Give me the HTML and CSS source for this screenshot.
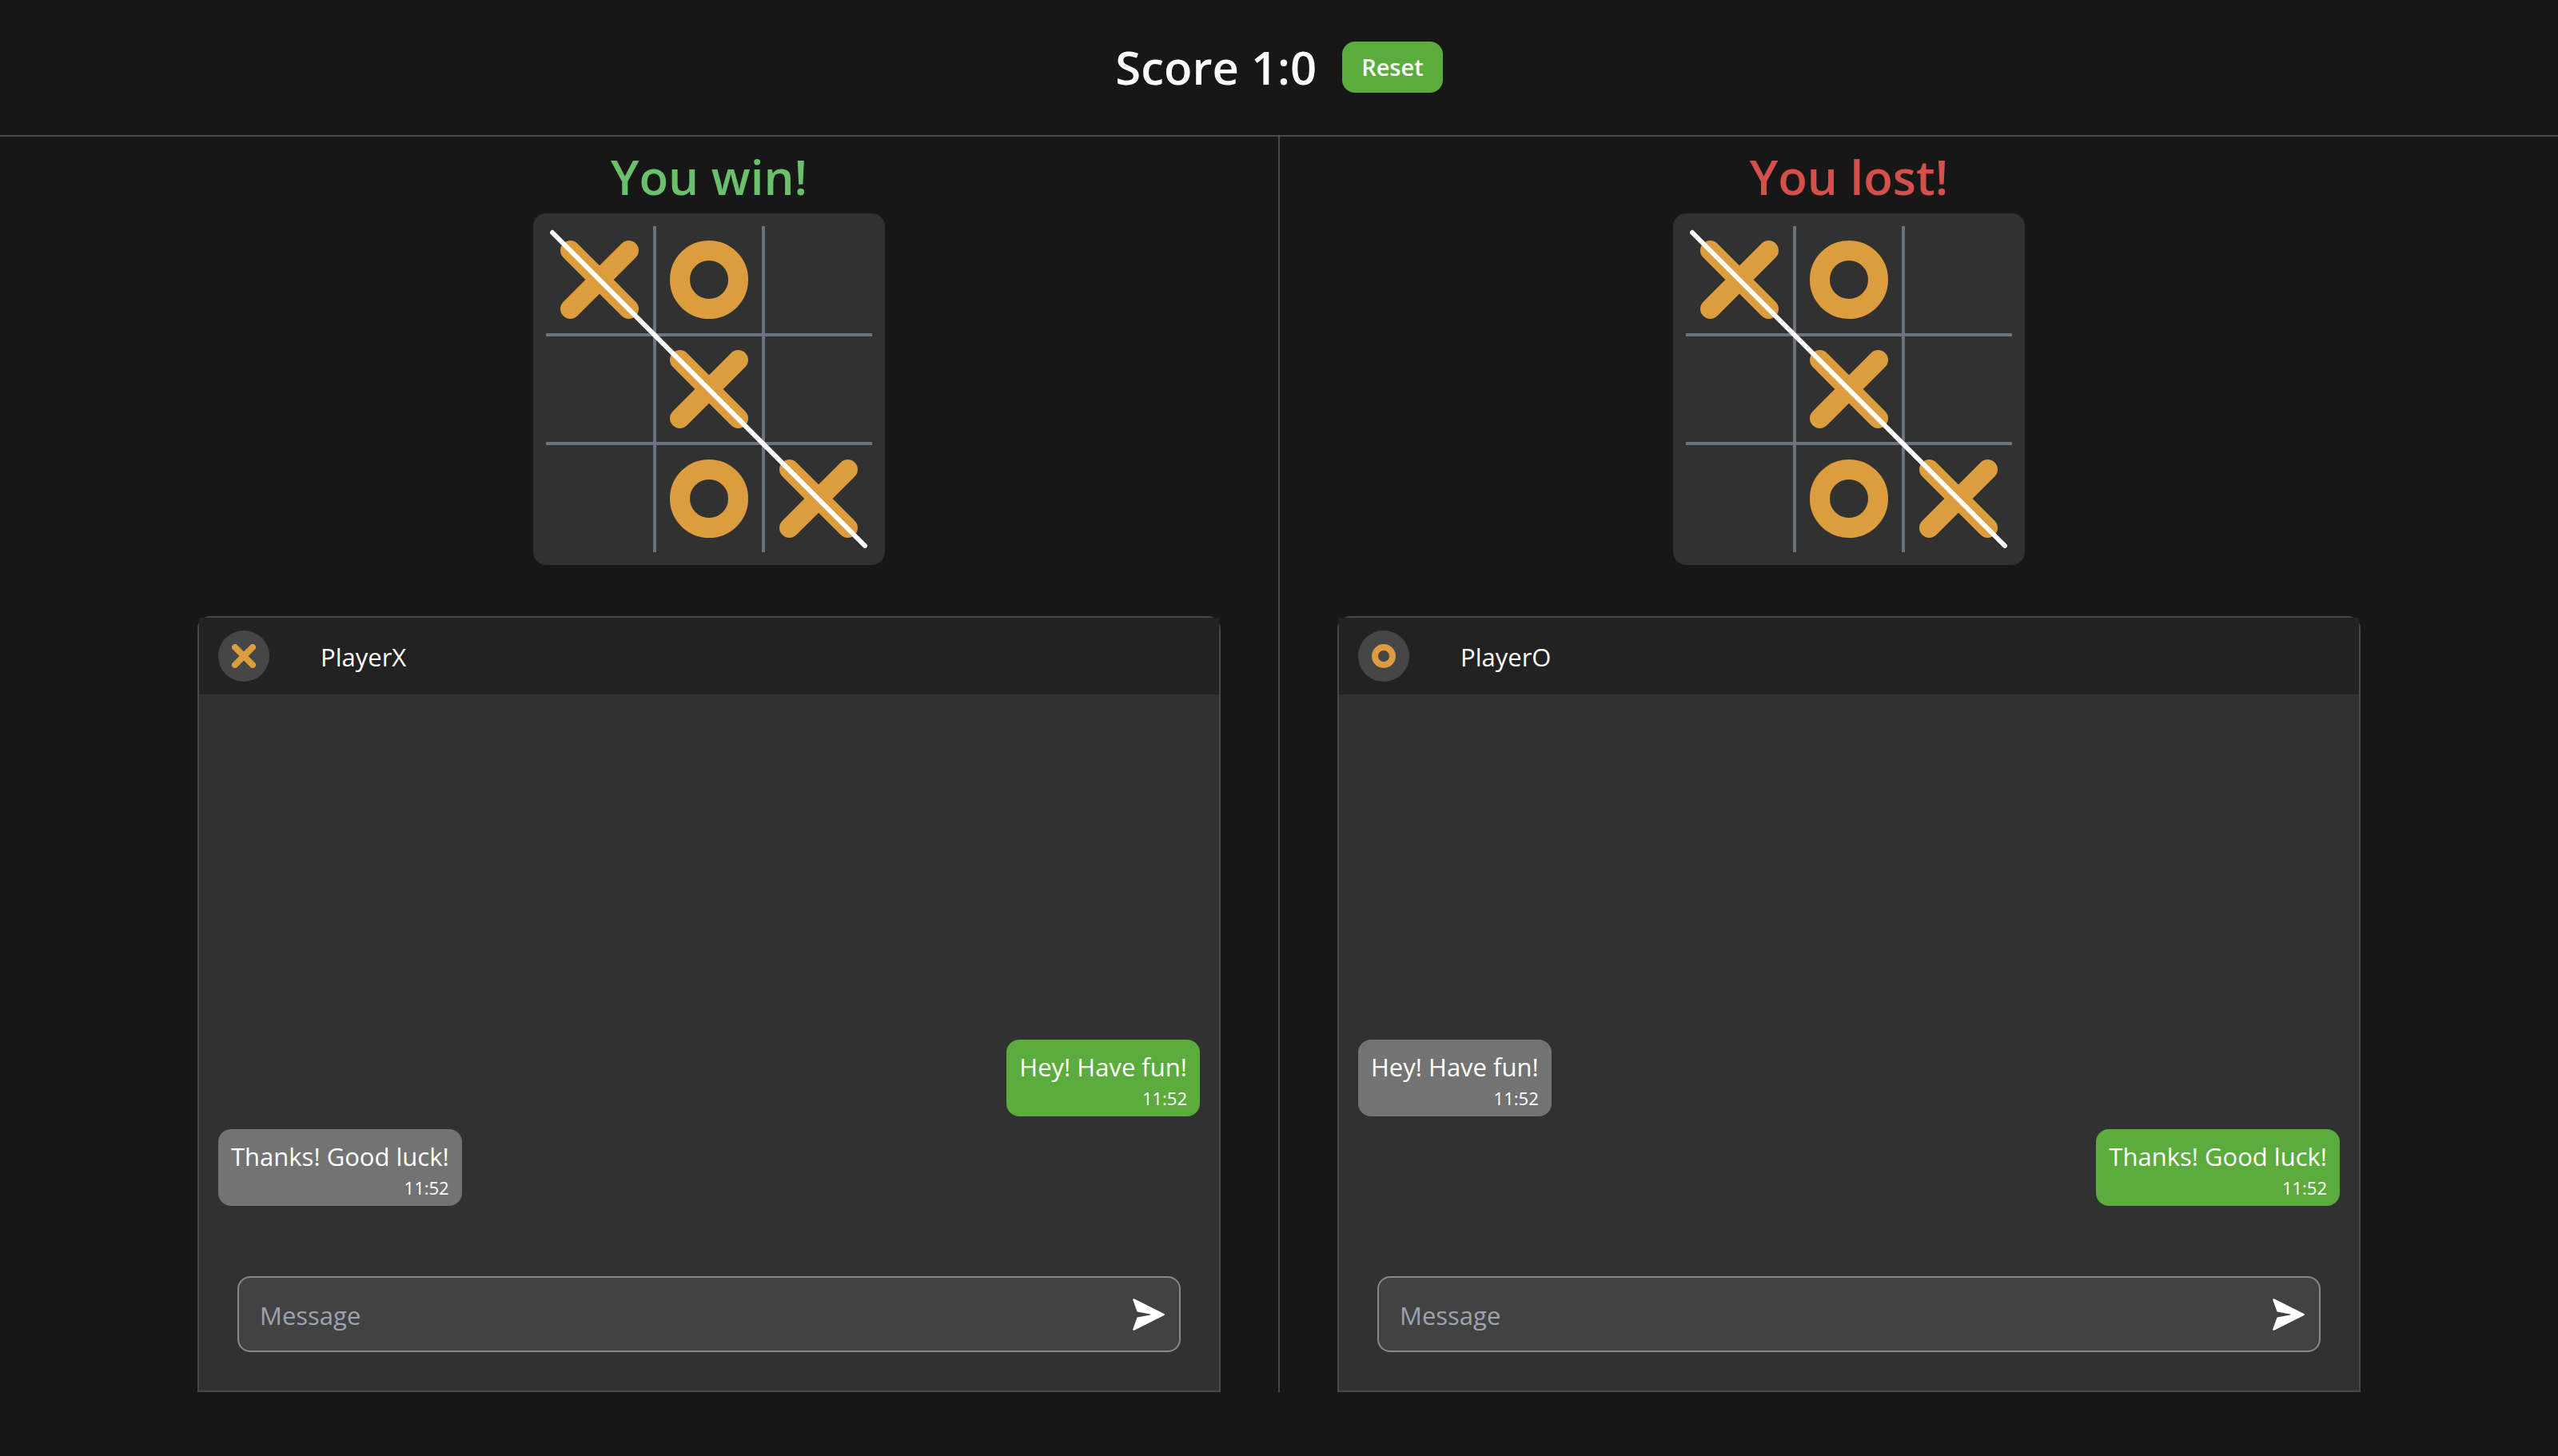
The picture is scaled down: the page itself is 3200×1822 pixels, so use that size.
FILE: index.html
```html
<!DOCTYPE html>
<html lang="en">
<head>
<meta charset="utf-8">
<meta name="viewport" content="width=device-width, initial-scale=1">
<title>Tic Tac Toe</title>
<link rel="stylesheet" href="styles.css">
</head>
<body>
<svg class="symbols" aria-hidden="true">
  <symbol id="mark-x" viewBox="0 0 98 98"><path d="M12.5 12.5l73 73M85.5 12.5l-73 73"/></symbol>
  <symbol id="mark-o" viewBox="0 0 98 98"><circle cx="49" cy="49" r="36.5"/></symbol>
  <symbol id="send" viewBox="0 0 40 40"><path d="M2.4.4 39.2 18.9a1.2 1.2 0 0 1 0 2.2L2.4 39.6A1.4 1.4 0 0 1 .4 37.8L5.6 23.4 22 20.4a.4.4 0 0 0 0-.8L5.6 16.6.4 2.2A1.4 1.4 0 0 1 2.4.4Z"/></symbol>
</svg>

<header class="score-bar">
  <h1 class="score">Score 1:0</h1>
  <button class="reset" type="button">Reset</button>
</header>

<main class="players">
  <section class="player" aria-label="PlayerX">
    <h2 class="status status-win">You win!</h2>
    <div class="board">
      <div class="cells">
        <button class="cell" type="button" aria-label="X"><svg class="mark"><use href="#mark-x"/></svg></button>
        <button class="cell" type="button" aria-label="O"><svg class="mark"><use href="#mark-o"/></svg></button>
        <button class="cell" type="button" aria-label="Empty"></button>
        <button class="cell" type="button" aria-label="Empty"></button>
        <button class="cell" type="button" aria-label="X"><svg class="mark"><use href="#mark-x"/></svg></button>
        <button class="cell" type="button" aria-label="Empty"></button>
        <button class="cell" type="button" aria-label="Empty"></button>
        <button class="cell" type="button" aria-label="O"><svg class="mark"><use href="#mark-o"/></svg></button>
        <button class="cell" type="button" aria-label="X"><svg class="mark"><use href="#mark-x"/></svg></button>
      </div>
      <svg class="strike" viewBox="0 0 440 440" aria-hidden="true"><path d="M24 24l391 392"/></svg>
    </div>
    <div class="chat">
      <div class="chat-header">
        <span class="avatar"><svg class="mark mark-small" viewBox="0 0 30 30" aria-hidden="true"><path d="M4 4l22 22M26 4l-22 22"/></svg></span>
        <span class="name">PlayerX</span>
      </div>
      <div class="messages">
        <div class="message sent"><p class="text">Hey! Have fun!</p><time class="time">11:52</time></div>
        <div class="message"><p class="text">Thanks! Good luck!</p><time class="time">11:52</time></div>
      </div>
      <form class="composer">
        <div class="field">
          <input class="input" type="text" placeholder="Message" aria-label="Message">
          <button class="send" type="button" aria-label="Send"><svg class="send-icon"><use href="#send"/></svg></button>
        </div>
      </form>
    </div>
  </section>

  <div class="divider"></div>

  <section class="player" aria-label="PlayerO">
    <h2 class="status status-lost">You lost!</h2>
    <div class="board">
      <div class="cells">
        <button class="cell" type="button" aria-label="X"><svg class="mark"><use href="#mark-x"/></svg></button>
        <button class="cell" type="button" aria-label="O"><svg class="mark"><use href="#mark-o"/></svg></button>
        <button class="cell" type="button" aria-label="Empty"></button>
        <button class="cell" type="button" aria-label="Empty"></button>
        <button class="cell" type="button" aria-label="X"><svg class="mark"><use href="#mark-x"/></svg></button>
        <button class="cell" type="button" aria-label="Empty"></button>
        <button class="cell" type="button" aria-label="Empty"></button>
        <button class="cell" type="button" aria-label="O"><svg class="mark"><use href="#mark-o"/></svg></button>
        <button class="cell" type="button" aria-label="X"><svg class="mark"><use href="#mark-x"/></svg></button>
      </div>
      <svg class="strike" viewBox="0 0 440 440" aria-hidden="true"><path d="M24 24l391 392"/></svg>
    </div>
    <div class="chat">
      <div class="chat-header">
        <span class="avatar"><svg class="mark mark-small" viewBox="0 0 30 30" aria-hidden="true"><circle cx="15" cy="15" r="11"/></svg></span>
        <span class="name">PlayerO</span>
      </div>
      <div class="messages">
        <div class="message"><p class="text">Hey! Have fun!</p><time class="time">11:52</time></div>
        <div class="message sent"><p class="text">Thanks! Good luck!</p><time class="time">11:52</time></div>
      </div>
      <form class="composer">
        <div class="field">
          <input class="input" type="text" placeholder="Message" aria-label="Message">
          <button class="send" type="button" aria-label="Send"><svg class="send-icon"><use href="#send"/></svg></button>
        </div>
      </form>
    </div>
  </section>
</main>
</body>
</html>
```
FILE: styles.css
```css
* {
  box-sizing: border-box;
  margin: 0;
  padding: 0;
}

body {
  display: flex;
  flex-direction: column;
  min-height: 100vh;
  padding-bottom: 80px;
  background: #171717;
  color: #fff;
  font-family: "Open Sans", "Noto Sans", sans-serif;
  font-size: 31px;
  line-height: 48px;
}

button,
input {
  border: 0;
  background: none;
  color: inherit;
  font: inherit;
}

button {
  cursor: pointer;
}

.symbols {
  position: absolute;
  width: 0;
  height: 0;
}

/* Score bar */

.score-bar {
  display: flex;
  justify-content: center;
  align-items: center;
  gap: 32px;
  padding: 48px 0 49px;
  border-bottom: 2px solid #484848;
}

.score {
  font-size: 58px;
  font-weight: 600;
  line-height: 72px;
}

.reset {
  padding: 8px 24px;
  border-radius: 16px;
  background: #5cab3d;
  font-size: 29px;
  font-weight: 600;
}

/* Two players side by side */

.players {
  display: flex;
  flex: 1;
  justify-content: center;
  gap: 72px;
}

.divider {
  width: 2px;
  background: #484848;
}

.player {
  display: flex;
  flex-direction: column;
  align-items: center;
  width: 40%;
  padding-top: 16px;
}

.status {
  margin-bottom: 12px;
  font-size: 60px;
  font-weight: 600;
  line-height: 68px;
}

.status-win {
  color: #6bc16b;
}

.status-lost {
  color: #d5504b;
}

/* Board */

.board {
  position: relative;
  margin-bottom: 64px;
  padding: 16px;
  border-radius: 16px;
  background: #313131;
}

.cells {
  display: grid;
  grid-template-columns: repeat(3, 136px);
  grid-auto-rows: 136px;
}

.cell {
  display: flex;
  justify-content: center;
  align-items: center;
  border: 0 solid #6b7280;
}

.cell:not(:nth-child(3n)) {
  border-right-width: 2px;
}

.cell:not(:nth-child(3n + 1)) {
  border-left-width: 2px;
}

.cell:nth-child(-n + 6) {
  border-bottom-width: 2px;
}

.cell:nth-child(n + 4) {
  border-top-width: 2px;
}

.mark {
  width: 98px;
  height: 98px;
  fill: none;
  stroke: #db9d3e;
  stroke-width: 25px;
  stroke-linecap: round;
}

.mark-small {
  width: 30px;
  height: 30px;
  stroke-width: 8px;
}

.strike {
  position: absolute;
  inset: 0;
  fill: none;
  stroke: #fff;
  stroke-width: 6px;
  stroke-linecap: round;
  pointer-events: none;
}

/* Chat */

.chat {
  display: flex;
  flex: 1;
  flex-direction: column;
  width: 100%;
  border: 2px solid #484848;
  border-radius: 16px 16px 0 0;
  background: #313131;
}

.chat-header {
  display: flex;
  align-items: center;
  gap: 64px;
  padding: 16px 24px;
  background: #222;
}

.avatar {
  display: flex;
  justify-content: center;
  align-items: center;
  width: 64px;
  height: 64px;
  border-radius: 50%;
  background: #464646;
}

.name {
  padding-top: 2px;
}

.messages {
  display: flex;
  flex: 1;
  flex-direction: column;
  justify-content: flex-end;
  align-items: flex-start;
  gap: 16px;
  padding: 24px 24px 40px;
}

.message {
  display: flex;
  flex-direction: column;
  padding: 10px 16px 8px;
  border-radius: 16px;
  background: #737373;
}

.sent {
  align-self: flex-end;
  background: #5cab3d;
}

.time {
  align-self: flex-end;
  font-size: 22px;
  line-height: 30px;
}

.composer {
  padding: 48px;
}

.field {
  display: flex;
  align-items: center;
  height: 95px;
  padding: 0 18px 0 26px;
  border: 2px solid #888;
  border-radius: 16px;
  background: #424242;
}

.input {
  flex: 1;
  min-width: 0;
  padding-top: 2px;
  outline: 0;
}

.input::placeholder {
  color: #9ca3af;
  opacity: 1;
}

.send {
  display: flex;
}

.send-icon {
  width: 40px;
  height: 40px;
  fill: #fff;
}
```
